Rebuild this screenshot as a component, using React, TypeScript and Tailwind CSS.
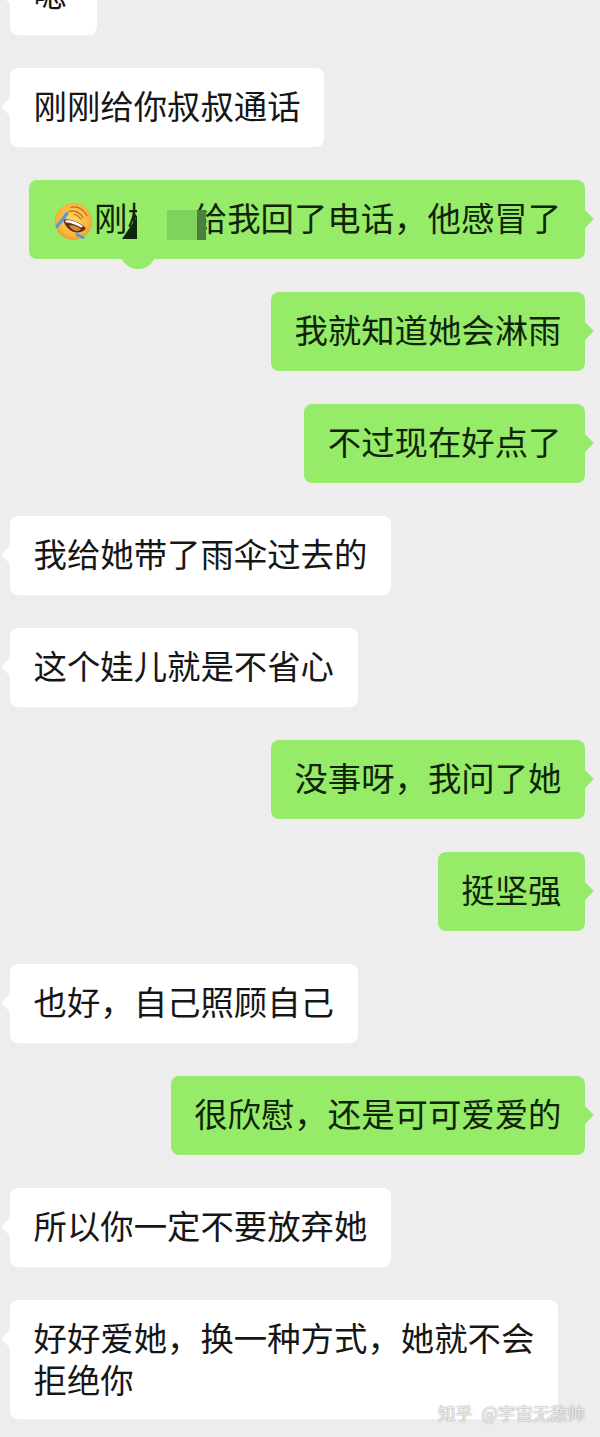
const font = 'font-["Noto_Sans_CJK_SC","Noto_Sans",sans-serif]';

type Msg = { me: boolean; text: string };

const topMessages: Msg[] = [
  { me: false, text: '嗯' },
  { me: false, text: '刚刚给你叔叔通话' },
];

const messages: Msg[] = [
  { me: true, text: '我就知道她会淋雨' },
  { me: true, text: '不过现在好点了' },
  { me: false, text: '我给她带了雨伞过去的' },
  { me: false, text: '这个娃儿就是不省心' },
  { me: true, text: '没事呀，我问了她' },
  { me: true, text: '挺坚强' },
  { me: false, text: '也好，自己照顾自己' },
  { me: true, text: '很欣慰，还是可可爱爱的' },
  { me: false, text: '所以你一定不要放弃她' },
];

function Tail({ me }: { me: boolean }) {
  if (me) {
    return <div className="absolute right-[-6px] top-[32px] w-[14px] h-[14px] rotate-45 bg-[#96eb69] rounded-[1px]" />;
  }
  return <div className="absolute left-[-6px] top-[32px] w-[14px] h-[14px] rotate-45 bg-white rounded-[1px]" />;
}

function Bubble({ me, text }: Msg) {
  return (
    <div className={me ? 'flex justify-end pr-[15px]' : 'flex justify-start pl-[10px]'}>
      <div
        className={
          me
            ? 'relative min-w-[87px] rounded-[8px] bg-[#96eb69] pl-[23.5px] pr-[23.5px] pt-[16.5px] pb-[22.5px] text-[33.4px] leading-[40px] text-[#0f2409] whitespace-nowrap'
            : 'relative min-w-[87px] rounded-[8px] bg-white pl-[23.5px] pr-[23.5px] pt-[16.5px] pb-[22.5px] text-[33.4px] leading-[40px] text-[#161616] whitespace-nowrap'
        }
      >
        <Tail me={me} />
        <span className="relative">{text}</span>
      </div>
    </div>
  );
}

function CryLaughEmoji() {
  return (
    <svg width="40" height="40" viewBox="4 4.5 40 40" className="shrink-0">
      <defs>
        <radialGradient id="face" cx="0.5" cy="0.45" r="0.6">
          <stop offset="0" stopColor="#fdd663" />
          <stop offset="0.7" stopColor="#fab63c" />
          <stop offset="1" stopColor="#ef8a28" />
        </radialGradient>
      </defs>
      <circle cx="23.5" cy="26" r="18.5" fill="url(#face)" />
      <path d="M19 16 C24 14 30 17 33 22 M21 12 C27 10 33 14 37 20 M24 19 C27 19 29 21 31 24" stroke="#b86a1a" strokeWidth="1.2" fill="none" strokeLinecap="round" />
      <path d="M13 24 C20 23 31 27 36 33 C30 40 17 38 13 24Z" fill="#5f3312" />
      <path d="M15 25 C21 24 29 27 33 31 L31 32 C26 29 20 27 16 27Z" fill="#fff" />
      <path d="M19 30 C23 29 28 31 31 34 C27 37 22 35 19 30Z" fill="#d98a3a" />
      <path d="M17 18 L7 31" stroke="#4b9be0" strokeWidth="3" strokeLinecap="round" />
      <path d="M27 39 L33 42" stroke="#4b9be0" strokeWidth="3" strokeLinecap="round" />
    </svg>
  );
}

function EditedBubble() {
  return (
    <div className="flex justify-end pr-[15px]">
      <div className="relative w-[556px] h-[79px] rounded-[8px] bg-[#96eb69] flex items-center pl-[25px] pb-[6px] text-[33.4px] leading-[40px] text-[#0f2409] whitespace-nowrap">
        <Tail me />
        <div className="translate-y-[3px] shrink-0">
          <CryLaughEmoji />
        </div>
        <span>刚树</span>
        <span className="w-[33px]" />
        <span className="relative">给我回了电话，他感冒了</span>
        {/* smudge over the hidden name */}
        <div className="absolute left-[108px] top-0 w-[30px] h-[79px] bg-[#96eb69]" />
        <div className="absolute left-[91px] top-[70px] w-[36px] h-[19px] rounded-b-[18px] bg-[#96eb69]" />
        <div className="absolute left-[93px] top-[37px] w-[15px] h-[22px] bg-[#12260c] [clip-path:polygon(100%_0,100%_100%,0_100%)]" />
        <div className="absolute left-[138px] top-[30px] w-[30px] h-[30px] bg-[#7fd25e]" />
        <div className="absolute left-[168px] top-[30px] w-[9px] h-[30px] bg-[#4f7d3c]" />
      </div>
    </div>
  );
}

export default function App() {
  return (
    <div className={`${font} relative w-[600px] h-[1437px] overflow-hidden bg-[#ededed]`}>
      <div className="flex flex-col gap-[33px] -mt-[44px]">
        {topMessages.map((m) => (
          <Bubble key={m.text} {...m} />
        ))}
        <EditedBubble />
        {messages.map((m) => (
          <Bubble key={m.text} {...m} />
        ))}
        <div className="flex justify-start pl-[10px]">
          <div className="relative rounded-[8px] bg-white pl-[23.5px] pr-[23.5px] pt-[15.5px] pb-[19.5px] text-[33.4px] leading-[42px] text-[#161616] whitespace-nowrap">
            <Tail me={false} />
            <span className="relative">
              好好爱她，换一种方式，她就不会
              <br />
              拒绝你
            </span>
          </div>
        </div>
      </div>
      <div className="absolute right-[15px] top-[1402px] text-[17.4px] leading-[22px] text-[#ececec] [word-spacing:5px] [text-shadow:0_0_1.5px_#777777] whitespace-nowrap">
        知乎 @宇宙无敌帅
      </div>
    </div>
  );
}
